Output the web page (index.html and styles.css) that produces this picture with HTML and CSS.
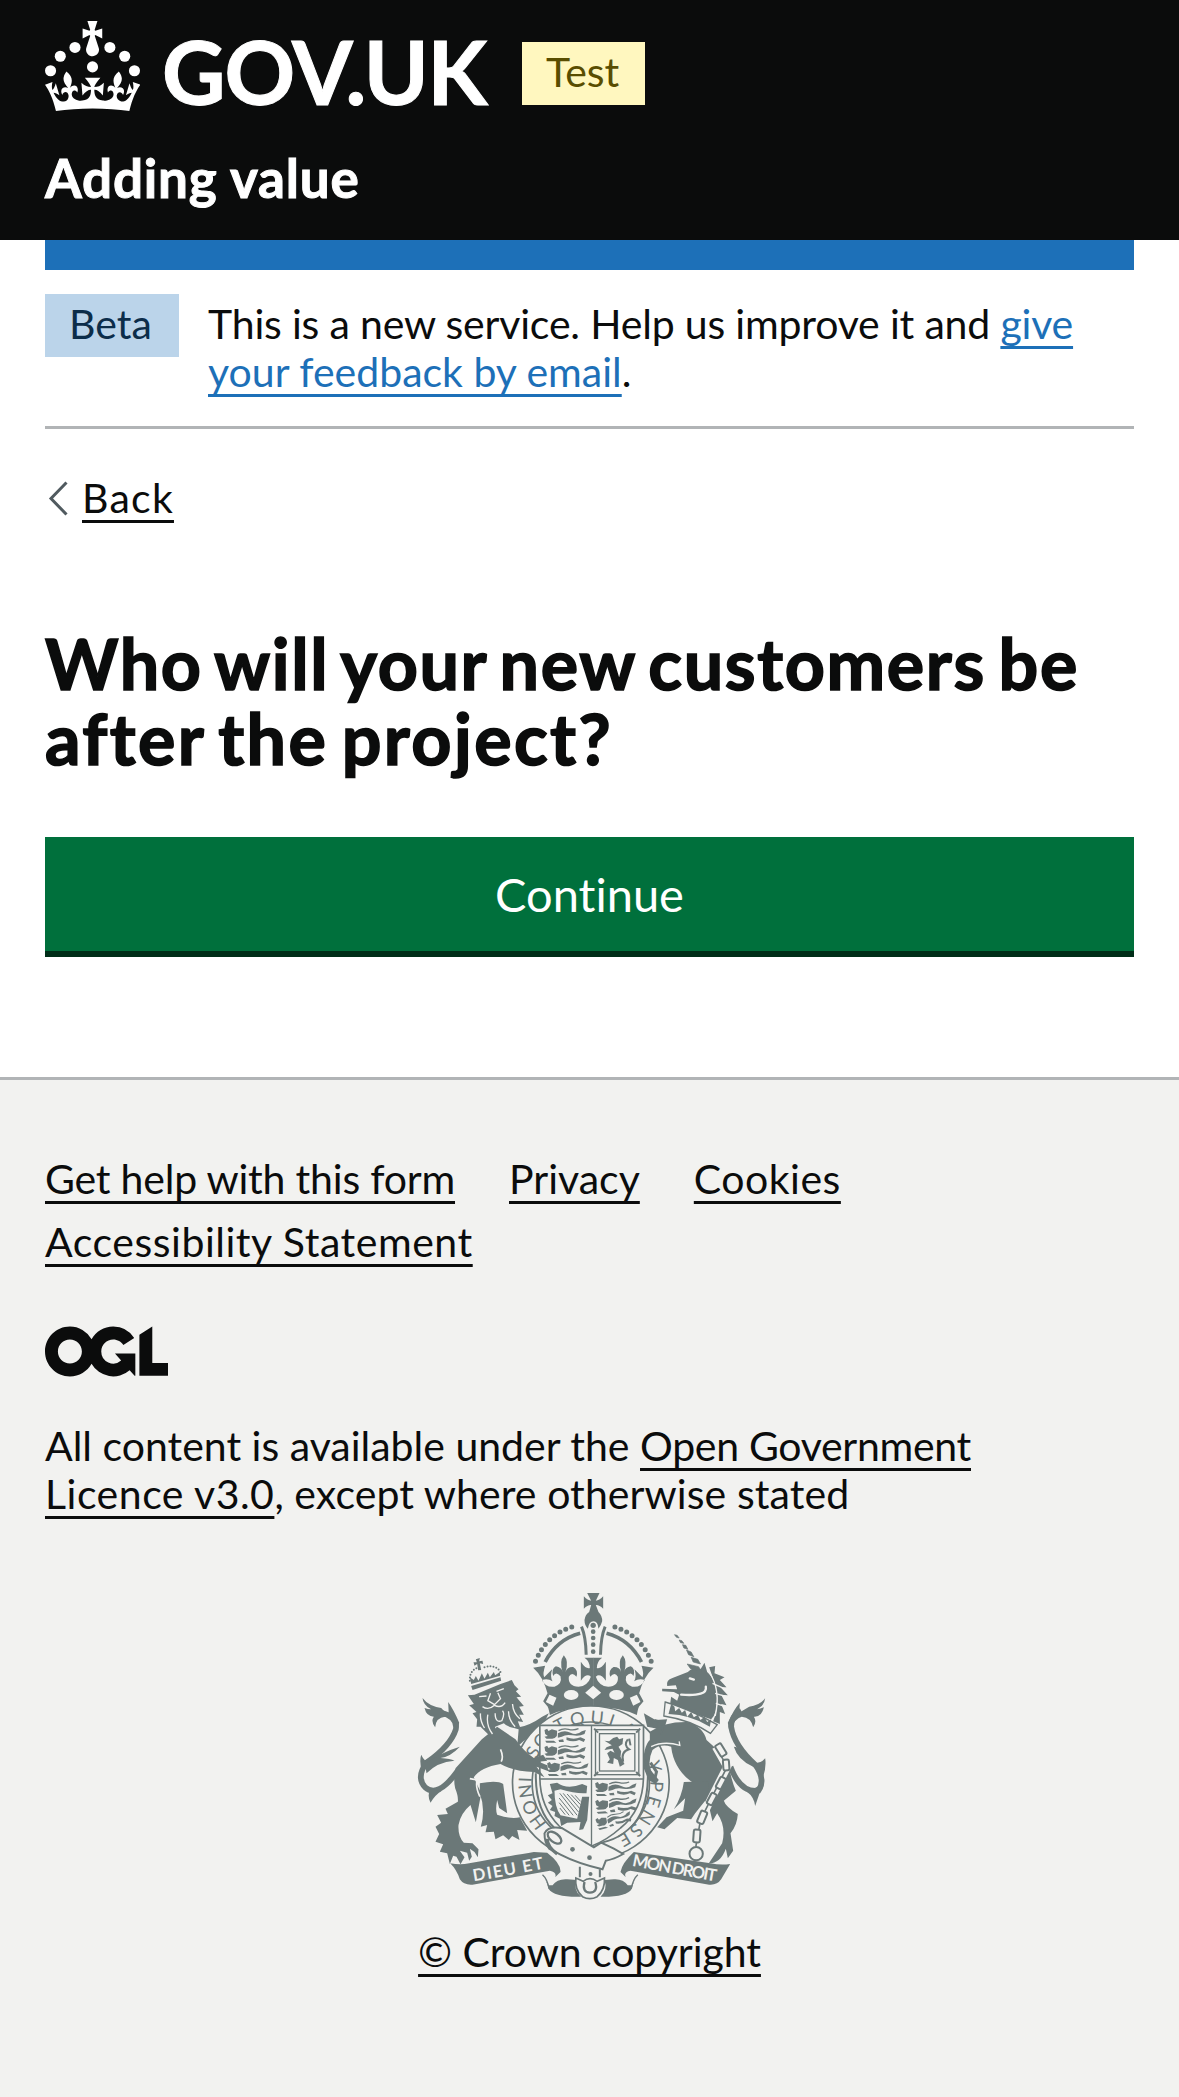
FILE: index.html
```html
<!DOCTYPE html>
<html lang="en">
<head>
<meta charset="utf-8">
<title>Who will your new customers be after the project?</title>
<link rel="stylesheet" href="styles.css">
</head>
<body>
<header class="header">
  <div class="header-brand">
    <svg class="crown" viewBox="0 0 63.4 60" aria-hidden="true">
      <g fill="#fff">
        <circle cx="20" cy="17.6" r="3.7"/><circle cx="10.2" cy="23.5" r="3.7"/><circle cx="3.7" cy="33.2" r="3.7"/><circle cx="31.7" cy="30.6" r="3.7"/><circle cx="43.3" cy="17.6" r="3.7"/><circle cx="53.2" cy="23.5" r="3.7"/><circle cx="59.7" cy="33.2" r="3.7"/>
        <path d="M33.1,9.8c.2-.1.3-.3.5-.5l4.6,2.4v-6.8l-4.6,1.5c-.1-.2-.3-.3-.5-.5l1.9-5.9h-6.7l1.9,5.9c-.2.1-.3.3-.5.5l-4.6-1.5v6.8l4.6-2.4c.1.2.3.3.5.5l-2.6,8c-.9,2.8,1.2,5.7,4.1,5.7h0c3,0,5.1-2.9,4.1-5.7l-2.6-8ZM37,37.9s-3.4,3.8-4.1,6.1c2.2,0,4.2-.5,6.4-2.8l-.7,8.5c-2-2.8-4.4-4.1-5.7-3.8.1,3.1.5,6.7,5.8,7.2,3.7.3,6.7-1.5,7-3.8.4-2.6-2-4.3-3.7-1.6-1.4-4.5,2.4-6.1,4.9-3.2-1.9-4.5-1.8-7.7,2.4-10.9,3,4,2.6,7.3-1.2,11.1,2.4-1.3,6.2,0,4,4.6-1.2-2.8-3.7-2.2-4.2.2-.3,1.7.7,3.7,3,4.2,1.9.3,4.7-.9,7-5.9-1.3,0-2.4.7-3.9,1.7l2.4-8c.6,2.3,1.4,3.7,2.2,4.5.6-1.6.5-2.8,0-5.3l5,1.8c-2.6,3.6-5.2,8.7-7.3,17.5-7.4-1.1-15.7-1.7-24.5-1.7h0c-8.8,0-17.1.6-24.5,1.7-2.1-8.9-4.7-13.9-7.3-17.5l5-1.8c-.5,2.5-.6,3.7,0,5.3.8-.8,1.6-2.3,2.2-4.5l2.4,8c-1.5-1-2.6-1.7-3.9-1.7,2.3,5,5.2,6.2,7,5.9,2.3-.4,3.3-2.4,3-4.2-.5-2.4-3-3.1-4.2-.2-2.2-4.6,1.6-6,4-4.6-3.7-3.7-4.2-7.1-1.2-11.1,4.2,3.2,4.3,6.4,2.4,10.9,2.5-2.8,6.3-1.3,4.9,3.2-1.8-2.7-4.1-1-3.7,1.6.3,2.3,3.3,4.1,7,3.8,5.4-.5,5.7-4.2,5.8-7.2-1.3-.2-3.7,1-5.7,3.8l-.7-8.5c2.2,2.3,4.2,2.7,6.4,2.8-.7-2.3-4.1-6.1-4.1-6.1h10.6Z"/>
      </g>
    </svg>
    <span class="wordmark">GOV.UK</span>
    <strong class="tag tag-yellow">Test</strong>
  </div>
  <div class="service-name">Adding value</div>
</header>
<div class="container">
  <div class="blue-bar"></div>
  <div class="phase-banner">
    <strong class="tag tag-blue">Beta</strong>
    <p class="phase-text"><span class="t-phase">This is a new service. Help us improve it and <a class="link-blue" href="#">give</a></span><br><a class="link-blue" href="#">your feedback by email</a>.</p>
  </div>
  <div class="back">
    <svg class="chevron" viewBox="0 0 22 36" aria-hidden="true"><path d="M19.5 2.5 4 18.5 19.5 34.5" fill="none" stroke="#505a5f" stroke-width="3"/></svg>
    <a class="t-back" href="#">Back</a>
  </div>
  <main>
    <h1 class="title"><span class="t-title1">Who will your new customers be</span><br><span class="t-title2">after the project?</span></h1>
    <button class="button" type="button">Continue</button>
  </main>
</div>
<footer class="footer">
  <nav class="footer-links">
    <a class="t-help" href="#">Get help with this form</a>
    <a href="#">Privacy</a>
    <a class="t-cookies" href="#">Cookies</a>
    <a class="t-access" href="#">Accessibility Statement</a>
  </nav>
  <svg class="ogl" viewBox="0 0 483.2 195.7" role="img" aria-label="OGL"><path fill="#0b0c0c" d="M421.5 142.8V.1l-50.7 32.3v161.1h112.4v-50.7zm-122.3-9.6A47.12 47.12 0 0 1 221 97.8c0-26 21.1-47.1 47.1-47.1 16.7 0 31.4 8.7 39.7 21.8l42.7-27.2A97.63 97.63 0 0 0 268.1 0c-36.5 0-68.3 20.1-85.1 49.7A98 98 0 0 0 97.8 0C43.9 0 0 43.9 0 97.8s43.9 97.8 97.8 97.8c36.5 0 68.3-20.1 85.1-49.7a97.76 97.76 0 0 0 149.6 25.4l19.4 22.2h3v-87.8h-80l24.3 27.5zM97.8 145c-26 0-47.1-21.1-47.1-47.1s21.1-47.1 47.1-47.1 47.1 21.1 47.1 47.1S123.8 145 97.8 145"/></svg>
  <p class="licence">All content is available under the <a class="t-open" href="#">Open Government</a><br><a class="t-licence" href="#">Licence v3.0</a><span class="t-except">, except where otherwise stated</span></p>
  <div class="copyright">
    <svg class="crest" viewBox="-1.5 0 1140 990" aria-hidden="true">
      <defs>
        <g id="halfcrown">
          <path d="M405 244Q440 158 528 137" fill="none" stroke="#6b7878" stroke-width="15" stroke-linecap="round" stroke-dasharray="0 19.4"/>
          <path d="M434 246Q470 178 539 160" fill="none" stroke="#6b7878" stroke-width="11"/>
          <path d="M543 140Q556 170 557 224" fill="none" stroke="#6b7878" stroke-width="9"/>
          <path d="M398 263L434 257Q426 280 431 292L455 268Q448 290 456 304Q442 294 424 300Q436 324 462 320Q486 312 480 289Q466 272 458 288Q452 266 466 259Q484 262 486 276Q476 244 490 226Q506 244 495 276Q500 260 518 261Q534 270 528 290Q514 274 505 290Q502 318 534 320Q562 318 571 290Q558 278 541 302L541 245Q556 268 568 264Q568 244 552 233L579 233V379Q500 382 448 405Q444 380 438 376L428 364L441 340Q428 290 398 263Z"/>
        </g>
        <g id="passant">
          <path d="M0 4L8 0L12 7L22 2L38 6L37 22Q30 32 20 30L6 30L0 24L10 22L2 16Z"/>
          <path d="M40 14Q60 2 78 12T112 8L124 4L120 16Q104 24 84 20T52 24L40 27Z"/>
          <path d="M66 26Q88 34 108 26L122 32L118 40L104 34Q86 42 66 34Z"/>
          <path d="M2 36H28L36 42H6ZM42 34L56 32L58 40H44Z"/>
          <path d="M42 6Q56 -2 72 2T102 0" fill="none" stroke="#6b7878" stroke-width="4"/>
        </g>
        <path id="garter" d="M571 787a178 178 0 0 1 0-356a178 178 0 0 1 0 356"/>
        <path id="motto1" d="M220 904Q330 886 438 864"/>
        <path id="motto2" d="M694 857Q820 882 950 905"/>
      </defs>
      <g fill="#6b7878">
        <!-- crown -->
        <use href="#halfcrown"/>
        <use href="#halfcrown" transform="matrix(-1 0 0 1 1157 0)"/>
        <path d="M560 39H597L586 62Q596 62 608 49V86Q596 74 586 75L594 96Q606 108 605 124Q602 136 594 146Q592 124 579 124Q566 124 562 146Q552 136 552 120Q554 104 566 96L572 75Q562 74 550 86V49Q562 62 572 62Z"/>
        <circle cx="578" cy="136" r="8"/><circle cx="578" cy="155" r="7"/><circle cx="578" cy="174" r="7"/><circle cx="578" cy="194" r="7"/><circle cx="578" cy="215" r="7"/>
        <path fill="#f2f2f0" d="M578 317L602 338L578 358L554 338ZM447 344L468 353L458 377L436 366ZM709 344L688 353L698 377L720 366Z"/>
        <ellipse fill="#f2f2f0" cx="512" cy="345" rx="22" ry="15"/><ellipse fill="#f2f2f0" cx="648" cy="345" rx="22" ry="15"/>
        <!-- shoulders behind the garter -->
        <path d="M355 442Q390 435 425 410L445 400L430 430L350 500ZM730 400L765 420L800 418L790 450L740 440Z"/>
        <!-- garter -->
        <ellipse cx="571" cy="608" rx="235" ry="230" fill="#f2f2f0" stroke="#6b7878" stroke-width="5"/>
        <ellipse cx="571" cy="608" rx="176" ry="182" fill="#f2f2f0" stroke="#6b7878" stroke-width="5"/>
        <g class="garter-text">
          <text><textPath href="#garter" startOffset="146" textLength="150">HONI</textPath></text>
          <text><textPath href="#garter" startOffset="352" textLength="76">SO</textPath></text>
          <text><textPath href="#garter" startOffset="456">T</textPath></text>
          <text><textPath href="#garter" startOffset="500" textLength="124">QUI</textPath></text>
          <text><textPath href="#garter" startOffset="650">A</textPath></text>
          <text><textPath href="#garter" startOffset="776">Y</textPath></text>
          <text><textPath href="#garter" startOffset="832" textLength="206">PENSE</textPath></text>
        </g>
        <!-- shield -->
        <path d="M418 436H729V590Q728 690 660 744Q620 780 574 798Q520 780 476 738Q418 680 418 590Z" fill="#f2f2f0" stroke="#6b7878" stroke-width="5"/>
        <path d="M406 580Q404 690 462 744M742 580Q744 690 690 744" fill="none" stroke="#6b7878" stroke-width="6"/>
        <path d="M573 436V798M418 597H729" fill="none" stroke="#6b7878" stroke-width="4"/>
        <use href="#passant" x="432" y="446"/><use href="#passant" x="432" y="497"/><use href="#passant" x="440" y="546"/>
        <use href="#passant" transform="translate(584 606)"/><use href="#passant" transform="translate(584 660) rotate(-4)"/><use href="#passant" transform="translate(584 716) scale(.86) rotate(-14)"/>
        <g fill="none" stroke="#6b7878" stroke-width="4">
          <rect x="585" y="449" width="130" height="135"/><rect x="597" y="461" width="106" height="112"/>
          <path d="M581 446l12 12M719 446l-12 12M581 588l12-12M719 588l-12-12" stroke-width="6"/>
          <path d="M668 545Q660 515 686 508Q668 495 682 478M686 476l4 20" stroke-width="6"/>
        </g>
        <path d="M638 474L650 470L656 478L668 474L666 492L654 500L662 514L660 530L672 552L658 560L652 540L640 534L638 552L620 548L628 538L620 520L630 512L642 518L636 506L612 510L618 502L634 496L622 488L612 482L626 484Z"/>
        <!-- harp -->
        <path d="M448 612L470 608Q500 630 545 612L560 618L558 640L548 640Q520 640 480 628L462 632Q462 680 480 706L530 716L545 650H566L560 720L548 748L536 750L540 726L500 728L482 738L478 716L462 708L464 696L448 690L456 678L442 668L454 660L442 646L456 640Z"/>
        <path d="M478 638Q474 690 490 702L528 708L540 646Z" fill="#f2f2f0"/>
        <path d="M478 640L530 706M488 640L534 696M500 642L538 686M512 644L540 674M524 646L540 664M476 654L518 706M476 668L506 706M478 684L494 704" stroke="#6b7878" stroke-width="3"/>
        <!-- lion: tail -->
        <path d="M172 572Q112 656 74 622Q46 592 78 548Q150 498 166 448Q172 410 122 398" fill="none" stroke="#6b7878" stroke-width="17"/>
        <path d="M66 354Q84 378 122 384L145 408L143 366Q160 390 176 428L172 450Q150 410 134 410Q106 412 104 442Q90 424 100 410Q78 410 72 384Q82 388 92 388Q68 376 66 354ZM74 556Q110 520 178 500Q150 530 120 534Q150 536 162 542Q110 546 78 580ZM62 524Q72 546 92 552L64 572Q56 546 62 524ZM88 628Q80 650 90 668Q104 644 124 632Z"/>
        <!-- lion: body -->
        <path d="M290 440L244 478L165 565Q158 600 164 625Q174 650 172 665L135 686L142 702L110 705L122 728L105 740L116 762L105 785L128 793L118 815L140 820L148 852L158 827L168 830L180 853L192 832L178 812L200 818L206 842L214 830L208 806L222 816L232 832L234 808L216 790L190 788Q172 770 174 735Q180 700 210 675L226 727L242 640L220 592Q240 562 300 552Q340 575 400 576L432 592L408 560L444 574L440 556L415 545L440 542L428 524L400 534Q370 515 345 478Z"/>
        <path d="M238 610Q290 600 308 612L320 700L296 684L290 660Q284 690 290 704Q330 718 358 712L380 752L350 750L357 780L335 768L325 780L308 766L285 778L280 755L255 757L260 735L241 740Q256 690 238 640Z"/>
        <path d="M208 596L230 600Q224 620 238 650M300 508Q310 530 302 545" fill="none" stroke="#f2f2f0" stroke-width="5"/>
        <!-- lion: head -->
        <path d="M202 346L222 344L300 312L334 300L342 316L354 328L346 334L362 350L348 352L370 378L356 380L370 404L356 404L368 426L352 424L362 450L340 444Q318 440 310 430L284 440L282 472L262 462L240 440L228 440L230 418L216 400L228 396L206 376L220 372Z"/>
        <path d="M236 350L258 348M288 334L310 326M270 340L262 362L282 374L300 356L292 338M246 380Q264 392 282 376Q302 386 314 368M284 400Q284 430 304 422Q314 400 306 392M240 400Q238 422 252 444M262 404Q256 436 276 462M324 394Q324 420 344 440M336 372Q338 400 358 416" fill="none" stroke="#f2f2f0" stroke-width="4"/>
        <path d="M212 318L300 292L302 302L216 330Z"/>
        <path d="M212 312L208 292L220 300L226 288L234 302L244 280L252 296L262 278L268 292L280 276L284 286L298 276L299 287Z"/>
        <path d="M226 238l12-4-2 10 10-2 2 10-10-2 4 20-9 1-3-19-8 5-3-10 10 0Z"/>
        <path d="M208 302Q206 270 236 262M252 262Q286 252 300 276" fill="none" stroke="#6b7878" stroke-width="6" stroke-linecap="round" stroke-dasharray="0 9"/>
        <!-- unicorn: tail -->
        <path d="M990 560Q1020 640 1074 632Q1096 600 1066 556Q1000 496 992 440Q992 408 1022 392" fill="none" stroke="#6b7878" stroke-width="17"/>
        <path d="M1094 355Q1078 376 1046 380L1016 398L1018 368Q1000 388 982 428L986 452Q1006 412 1024 410Q1052 412 1058 442Q1070 424 1060 410Q1084 412 1090 382Q1080 386 1070 388Q1092 376 1094 355ZM1094 535Q1080 552 1060 548Q1020 500 1000 500Q1012 540 1058 560L1088 590Q1098 560 1094 535ZM1040 636Q1060 650 1064 678Q1074 650 1086 612Z"/>
        <!-- unicorn: hind parts and far leg -->
        <path d="M748 455Q790 425 860 426Q908 440 918 480Q965 520 985 555Q992 600 1006 632L970 662Q975 680 1012 702Q1010 736 990 760L998 812L982 835L976 806Q960 850 925 850Q945 820 965 790Q978 740 950 700L936 724L928 690Q900 640 880 610Q820 570 812 500Q780 490 756 510Q742 540 750 570L775 600L765 612L744 600L728 560Q728 500 748 480Z"/>
        <path d="M850 606L925 604L920 655L884 700L872 718L830 714L792 748L770 742L798 712L848 692L854 655L820 688Q844 650 850 606Z"/>
        <path d="M752 500Q790 482 838 496L836 484M880 500" fill="none" stroke="#f2f2f0" stroke-width="4"/>
        <path d="M750 548L768 575L762 600M736 540Q750 590 768 606" fill="none" stroke="#6b7878" stroke-width="9"/>
        <!-- unicorn: head, collar and mane -->
        <path d="M785 326L830 328L826 316L800 318Q796 300 816 294L862 276Q878 258 900 268L912 248L920 276Q948 300 950 360Q950 400 932 418Q880 400 808 378L812 350L830 362L836 344L820 336L785 334Z"/>
        <path d="M926 262L944 258L942 280L972 292L958 300L978 322L960 322L982 346L962 344L978 376L962 372L974 402L958 396L958 432L938 424Q964 360 938 296Z"/>
        <path d="M868 295L880 299M916 320Q922 350 842 344" fill="none" stroke="#f2f2f0" stroke-width="7" stroke-linecap="round"/>
        <path d="M926 276Q962 330 944 408M936 310l36 16M944 340l34 10M946 370l28 10" fill="none" stroke="#f2f2f0" stroke-width="4"/>
        <path d="M794 366Q860 384 950 434L930 460Q870 420 790 408Z" fill="#f2f2f0" stroke="#6b7878" stroke-width="4"/>
        <path d="M812 372l10 8 2 14 12-10 8 14 10-8 6 20 12-14 8 16 12-8 8 16 12-10 8 16 12-8-4 22Q870 404 804 402Z"/>
        <path d="M822 164l8 2 6 8-8-2ZM836 180l8 2 6 8-10-2ZM846 194l10 2 6 12-12-4ZM858 210l14 6 8 14-16-6ZM872 232l20 6 8 14-22-6ZM860 252l34 8 10 14-34-8Z" stroke="#6b7878" stroke-width="2"/>
        <path d="M762 420l28 8-8 36M770 440h24" fill="none" stroke="#6b7878" stroke-width="6"/>
        <!-- chain -->
        <path d="M946 500L980 560L900 720L886 800" fill="none" stroke="#f2f2f0" stroke-width="24"/>
        <path d="M946 500L980 560L900 720L886 800" fill="none" stroke="#6b7878" stroke-width="5"/>
        <g fill="#f2f2f0" stroke="#6b7878" stroke-width="6">
          <rect x="942" y="500" width="38" height="20" rx="5" transform="rotate(58 961 510)"/>
          <rect x="961" y="546" width="32" height="18" rx="5" transform="rotate(86 977 555)"/>
          <rect x="943" y="600" width="36" height="18" rx="5" transform="rotate(118 961 609)"/>
          <rect x="916" y="648" width="36" height="18" rx="5" transform="rotate(118 934 657)"/>
          <rect x="886" y="702" width="38" height="20" rx="5" transform="rotate(112 905 712)"/>
          <rect x="870" y="758" width="38" height="20" rx="5" transform="rotate(94 889 768)"/>
          <circle cx="887" cy="821" r="20"/>
        </g>
        <!-- belt -->
        <path d="M432 760Q444 736 486 745L580 802L602 788L640 806L668 822Q640 838 616 842L606 868Q530 850 480 824L446 806Q432 790 432 760Z" fill="#f2f2f0" stroke="#6b7878" stroke-width="6"/>
        <path d="M440 776Q440 800 470 822" fill="none" stroke="#6b7878" stroke-width="10"/>
        <ellipse cx="462" cy="773" rx="24" ry="13" transform="rotate(38 462 773)" fill="none" stroke="#6b7878" stroke-width="7"/>
        <circle cx="516" cy="808" r="7"/><circle cx="567" cy="833" r="7"/><circle cx="570" cy="882" r="6"/>
        <path d="M538 860V892M598 868V892" fill="none" stroke="#6b7878" stroke-width="6"/>
        <!-- motto scroll -->
        <path d="M149 850Q180 856 206 850Q340 826 400 816L440 818Q482 850 480 876L464 892Q470 876 448 872L216 914Q190 916 178 898Q168 868 149 850ZM989 852Q960 856 930 850L700 816Q664 850 660 876L676 892Q668 876 690 872L926 914Q950 916 962 898Z"/>
        <path d="M426 884Q438 900 444 926Q460 950 530 950H542Q516 930 530 900L500 898Q470 896 456 916M712 884Q700 900 694 926Q680 950 608 950H600Q622 930 612 900L640 898Q668 896 682 916"/>
        <path d="M426 884Q452 880 464 890L456 916L444 916ZM712 884Q686 880 676 890L682 916L694 916Z" fill="#f2f2f0"/>
        <path d="M426 884Q440 896 446 926M712 884Q698 896 692 926" fill="none" stroke="#6b7878" stroke-width="4"/>
        <path d="M526 894L548 904Q568 888 590 904L612 894Q614 930 590 950Q568 962 546 950Q522 930 526 894Z" fill="#f2f2f0" stroke="#6b7878" stroke-width="5"/>
        <path d="M552 906Q544 936 568 938Q594 936 584 906" fill="none" stroke="#6b7878" stroke-width="7"/>
        <g class="motto">
          <text><textPath href="#motto1" textLength="214">DIEU ET</textPath></text>
          <text><textPath href="#motto2" textLength="256">MON DROIT</textPath></text>
        </g>
      </g>
    </svg>
    <a class="t-crown" href="#">© Crown copyright</a>
  </div>
</footer>
</body>
</html>
```
FILE: styles.css
```css
* { box-sizing: border-box; }
body {
  margin: 0;
  background: #fff;
  color: #0b0c0c;
  font: 41px/48px Lato, "Noto Sans", sans-serif;
  font-variant-ligatures: none;
}
a {
  color: inherit;
  text-decoration: underline;
  text-decoration-thickness: 3px;
  text-underline-offset: 7px;
}
p, h1 { margin: 0; }

.header {
  height: 240px;
  padding: 21px 45px 0;
  background: #0b0c0c;
  color: #fff;
}
.header-brand { display: flex; align-items: flex-start; height: 90px; }
.crown { flex: none; width: 95px; height: 90px; }
.wordmark {
  width: 327px;
  margin: -1px 28px 0 22px;
  font-size: 87.5px;
  line-height: 104px;
  font-weight: 700;
  letter-spacing: -1.1px;
  white-space: nowrap;
  -webkit-text-stroke: 1px currentColor;
}
.header-brand .tag { margin-top: 21px; margin-left: 5px; }
.service-name {
  margin-top: 37px;
  font-size: 53px;
  line-height: 60px;
  font-weight: 700;
  letter-spacing: 0.8px;
  -webkit-text-stroke: 1px currentColor;
}
.tag {
  flex: none;
  height: 63px;
  padding: 6px 24px 0;
  font-weight: 400;
}
.tag-yellow { width: 123px; background: #fff7bf; color: #594d00; }
.tag-blue { width: 134px; background: #bbd4ea; color: #0c2d4a; }

.container { padding: 0 45px; }
.blue-bar { height: 30px; background: #1d70b8; }
.phase-banner {
  display: flex;
  gap: 29px;
  height: 159px;
  padding-top: 24px;
  border-bottom: 3px solid #b1b4b6;
}
.phase-text { padding-top: 6px; white-space: nowrap; }
.t-phase { letter-spacing: -0.18px; }
.link-blue { color: #1d70b8; }
.back { display: flex; align-items: flex-start; gap: 13px; margin-top: 45px; padding-left: 2px; }
.chevron { width: 22px; height: 36px; margin-top: 6px; }
.t-back { letter-spacing: 1.25px; }
.title {
  margin-top: 104px;
  font-size: 70px;
  line-height: 75px;
  font-weight: 700;
  word-spacing: -6px;
  white-space: nowrap;
  -webkit-text-stroke: 1.6px currentColor;
}
.t-title1 { letter-spacing: 1.65px; }
.t-title2 { letter-spacing: 2.4px; }
.button {
  display: block;
  width: 100%;
  height: 114px;
  margin: 61px 0 126px;
  padding: 0;
  border: 0;
  background: #00703c;
  box-shadow: 0 6px 0 #002d18;
  color: #fff;
  font: 47px/56px Lato, "Noto Sans", sans-serif;
  font-variant-ligatures: none;
}

.footer {
  min-height: 1020px;
  padding: 75px 45px 0;
  border-top: 3px solid #b1b4b6;
  background: #f2f2f0;
}
.footer-links { display: flex; flex-wrap: wrap; gap: 15px 54px; width: 1000px; white-space: nowrap; }
.t-help { letter-spacing: -0.2px; }
.t-cookies { letter-spacing: 0.5px; margin-right: 200px; }
.t-access { letter-spacing: 0.54px; }
.ogl { display: block; width: 123px; height: 51px; margin-top: 60px; }
.licence { margin-top: 45px; white-space: nowrap; }
.t-open { letter-spacing: -0.3px; }
.t-licence { letter-spacing: 0.5px; }
.t-except { letter-spacing: 0.08px; }
.copyright { display: flex; flex-direction: column; align-items: center; margin-top: 62px; }
.crest { width: 380px; height: 330px; margin-bottom: 18px; }
.t-crown { letter-spacing: -0.06px; }
.garter-text { font: 54px Lato, sans-serif; }
.motto { font: 700 50px Lato, sans-serif; fill: #f2f2f0; }
```
